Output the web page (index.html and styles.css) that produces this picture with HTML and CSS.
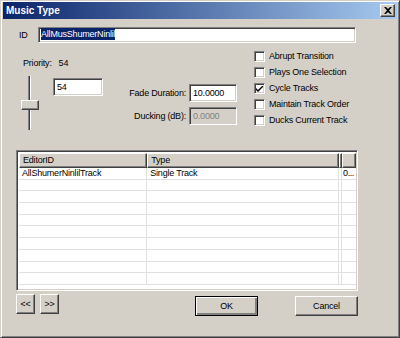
FILE: index.html
```html
<!DOCTYPE html>
<html>
<head>
<meta charset="utf-8">
<link rel="stylesheet" href="styles.css">
</head>
<body>
<div class="window">
  <div class="titlebar">
    <span class="title">Music Type</span>
    <span class="close"><svg width="8" height="7" viewBox="0 0 8 7"><path d="M0 0h2l2 2 2-2h2L5 3.5 8 7H6L4 5 2 7H0l3-3.5z" fill="#000"/></svg></span>
  </div>
  <div class="idrow">
    <span class="idlabel">ID</span>
    <div class="field idfield"><span class="sel">AllMusShumerNinlil</span></div>
  </div>
  <div class="mid">
    <div class="left">
      <div class="priority">Priority:&nbsp;&nbsp;&nbsp;54</div>
      <div class="leftrow">
        <div class="slider"><div class="track"></div><div class="thumb"></div></div>
        <div class="field prio">54</div>
        <div class="fade">
          <div class="frow"><span class="flabel">Fade Duration:</span><div class="field num">10.0000</div></div>
          <div class="frow"><span class="flabel">Ducking (dB):</span><div class="field num disabled">0.0000</div></div>
        </div>
      </div>
    </div>
    <div class="checks">
      <div class="chk"><span class="box"></span>Abrupt Transition</div>
      <div class="chk"><span class="box"></span>Plays One Selection</div>
      <div class="chk"><span class="box"><svg width="7" height="7" viewBox="0 0 7 7"><path d="M0 2l2 2 5-5v2l-5 5-2-2z" fill="#000"/></svg></span>Cycle Tracks</div>
      <div class="chk"><span class="box"></span>Maintain Track Order</div>
      <div class="chk"><span class="box"></span>Ducks Current Track</div>
    </div>
  </div>
  <div class="list">
    <div class="row head">
      <div class="c c1 h">EditorID</div>
      <div class="c c2 h">Type</div>
      <div class="c c3 h"></div>
      <div class="c c4 h"></div>
    </div>
    <div class="row"><div class="c c1">AllShumerNinlilTrack</div><div class="c c2">Single Track</div><div class="c c3"></div><div class="c c4">0...</div></div>
    <div class="row"><div class="c c1"></div><div class="c c2"></div><div class="c c3"></div><div class="c c4"></div></div>
    <div class="row"><div class="c c1"></div><div class="c c2"></div><div class="c c3"></div><div class="c c4"></div></div>
    <div class="row"><div class="c c1"></div><div class="c c2"></div><div class="c c3"></div><div class="c c4"></div></div>
    <div class="row"><div class="c c1"></div><div class="c c2"></div><div class="c c3"></div><div class="c c4"></div></div>
    <div class="row"><div class="c c1"></div><div class="c c2"></div><div class="c c3"></div><div class="c c4"></div></div>
    <div class="row"><div class="c c1"></div><div class="c c2"></div><div class="c c3"></div><div class="c c4"></div></div>
    <div class="row"><div class="c c1"></div><div class="c c2"></div><div class="c c3"></div><div class="c c4"></div></div>
    <div class="row"><div class="c c1"></div><div class="c c2"></div><div class="c c3"></div><div class="c c4"></div></div>
    <div class="row"><div class="c c1"></div><div class="c c2"></div><div class="c c3"></div><div class="c c4"></div></div>
  </div>
  <div class="bottom">
    <div class="btn small">&lt;&lt;</div>
    <div class="btn small">&gt;&gt;</div>
    <div class="spacer"></div>
    <div class="btn big default">OK</div>
    <div class="btn big">Cancel</div>
  </div>
</div>
</body>
</html>
```
FILE: styles.css
```css
html, body { margin: 0; padding: 0; background: #d4d0c8; }
body { font-family: "Liberation Sans", Arial, sans-serif; font-size: 9px; letter-spacing: -0.2px; color: #000; }
.window {
  width: 400px; height: 338px; box-sizing: border-box;
  border: 1px solid; border-color: #d4d0c8 #404040 #404040 #d4d0c8;
  box-shadow: inset 1px 1px #fff, inset -1px -1px #808080;
  padding: 1px 2px 2px 2px; background: #d4d0c8; overflow: hidden;
}
.titlebar {
  height: 17px; display: flex; align-items: center; justify-content: space-between;
  background: linear-gradient(to right, #0a246a, #a6caf0);
  padding: 0 2px 0 3px;
}
.title { color: #fff; font-weight: bold; font-size: 10px; letter-spacing: 0; }
.close {
  width: 15px; height: 13px; box-sizing: border-box; background: #d4d0c8;
  border: 1px solid; border-color: #fff #404040 #404040 #fff;
  box-shadow: inset -1px -1px #808080;
  display: flex; align-items: center; justify-content: center;
}
.field {
  background: #fff; box-sizing: border-box;
  border: 1px solid; border-color: #808080 #fff #fff #808080;
  box-shadow: inset 1px 1px #404040, inset -1px -1px #d4d0c8;
  padding: 2px 3px; line-height: 12px; height: 17px;
}
.idrow { display: flex; align-items: center; margin: 8px 0 0 16px; }
.idlabel { width: 19px; }
.idfield { width: 318px; height: 16px; padding: 1px 2px; line-height: 11px; }
.sel { background: #0a246a; color: #fff; padding: 1px 0; }
.mid { display: flex; height: 107px; }
.left { width: 234px; }
.priority { margin: 14px 0 0 20px; line-height: 12px; }
.leftrow { display: flex; margin-top: 7px; }
.slider { width: 18px; height: 55px; margin-left: 18px; position: relative; }
.track {
  position: absolute; left: 7px; top: 0; width: 1px; height: 54px;
  background: #404040; border-left: 1px solid #808080; border-right: 1px solid #fff;
}
.thumb {
  position: absolute; left: 0; top: 24px; width: 18px; height: 10px; box-sizing: border-box;
  background: #d4d0c8; border: 1px solid; border-color: #fff #404040 #404040 #fff;
  box-shadow: inset -1px -1px #808080;
}
.prio { width: 50px; height: 18px; margin: 2px 0 0 14px; }
.fade { margin: 8px 0 0 0; display: flex; flex-direction: column; gap: 5px; }
.frow { display: flex; align-items: center; }
.flabel { width: 86px; text-align: right; padding-right: 3px; box-sizing: border-box; }
.num { width: 48px; height: 18px; }
.num.disabled { background: #d4d0c8; color: #808080; }
.checks { margin: 8px 0 0 17px; display: flex; flex-direction: column; gap: 5px; }
.chk { display: flex; align-items: center; height: 11px; line-height: 11px; }
.box {
  width: 11px; height: 11px; box-sizing: border-box; background: #fff; margin-right: 4px;
  border: 1px solid; border-color: #808080 #fff #fff #808080;
  box-shadow: inset 1px 1px #404040, inset -1px -1px #d4d0c8;
  display: flex; align-items: center; justify-content: center;
}
.box svg { margin-top: 1px; }
.list {
  margin: 0 0 0 13px; width: 342px; height: 141px; box-sizing: border-box; background: #fff;
  border: 1px solid; border-color: #808080 #fff #fff #808080;
  box-shadow: inset 1px 1px #404040, inset -1px -1px #d4d0c8;
  padding: 2px 1px 1px 2px; overflow: hidden;
}
.row { display: flex; height: 11.7px; box-sizing: border-box; border-bottom: 1px solid #e0e0e0; line-height: 11px; }
.row.head { height: 15px; border-bottom: none; line-height: 13px; }
.c { box-sizing: border-box; border-right: 1px solid #e0e0e0; padding-left: 3px; white-space: nowrap; overflow: hidden; }
.c1 { width: 129px; }
.c2 { width: 193px; }
.c3 { width: 3px; padding: 0; }
.c4 { width: 14px; padding-left: 1px; border-right: none; letter-spacing: -0.4px; }
.h {
  background: #d4d0c8; border: 1px solid; border-color: #fff #404040 #404040 #fff;
  box-shadow: inset -1px -1px #808080;
}
.c3.h, .c4.h { padding: 0; }
.bottom { display: flex; align-items: flex-start; margin: 3px 0 0 13px; width: 342px; }
.btn {
  box-sizing: border-box; background: #d4d0c8; text-align: center;
  border: 1px solid; border-color: #fff #404040 #404040 #fff;
  box-shadow: inset -1px -1px #808080;
  display: flex; align-items: center; justify-content: center;
}
.small { width: 19px; height: 20px; margin-right: 5px; }
.big { width: 63px; height: 20px; margin-top: 2px; }
.default { border: 1px solid #000; box-shadow: inset 1px 1px #fff, inset -2px -2px #808080; margin-right: 37px; }
.spacer { flex: 1; }
```
